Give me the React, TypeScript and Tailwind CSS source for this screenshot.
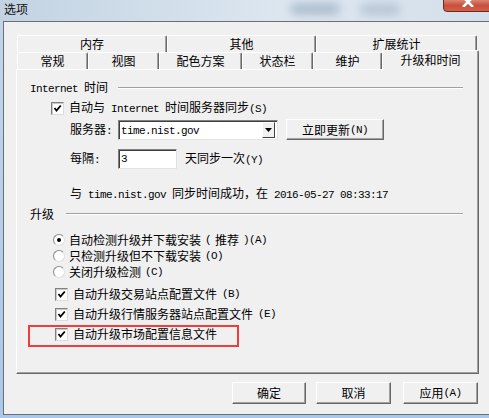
import React from 'react';

const ASCII = /^[\x20-\x7e]+$/;

// SimSun-like text: ASCII runs get a half-width mono face, CJK keeps 12px
function T({ s }: { s: string }) {
  return (
    <>
      {s.split(/([\x20-\x7e]+)/).map((p, i) =>
        ASCII.test(p) ? (
          <span key={i} className="font-['Liberation_Mono',monospace] text-[11px] tracking-[-0.6px] whitespace-pre">
            {p}
          </span>
        ) : (
          <React.Fragment key={i}>{p}</React.Fragment>
        )
      )}
    </>
  );
}

function Check() {
  return (
    <span className="flex h-[13px] w-[13px] shrink-0 items-center justify-center border border-t-[#808080] border-l-[#808080] border-r-[#dcdcdc] border-b-[#dcdcdc] bg-white shadow-[inset_1px_1px_0_#c8c8c8]">
      <svg width="9" height="9" viewBox="0 0 9 9">
        <polyline points="1.5,4 3.5,6.5 7.8,1.5" fill="none" stroke="#000" strokeWidth="1.8" />
      </svg>
    </span>
  );
}

function Radio({ on }: { on?: boolean }) {
  return (
    <span className="flex h-[12px] w-[12px] shrink-0 items-center justify-center rounded-full border border-t-[#8a8a8a] border-l-[#8a8a8a] border-r-[#e0e0e0] border-b-[#e0e0e0] bg-white">
      {on && <span className="h-[4px] w-[4px] rounded-full bg-black" />}
    </span>
  );
}

function Btn({ label, className }: { label: string; className: string }) {
  return (
    <div
      className={`flex items-center justify-center border border-t-white border-l-white border-r-[#696969] border-b-[#696969] bg-[#f0f0f0] shadow-[inset_-1px_-1px_0_#a0a0a0] ${className}`}
    >
      <T s={label} />
    </div>
  );
}

function Tab({ label, className }: { label: string; className: string }) {
  return (
    <div
      className={`flex items-center justify-center rounded-t-[2px] border-l border-t border-r border-l-white border-t-white border-r-[#696969] bg-[#f0f0f0] shadow-[inset_-1px_0_0_#a0a0a0] ${className}`}
    >
      {label}
    </div>
  );
}

function GroupHead({ label, gap }: { label: string; gap: string }) {
  return (
    <div className={`ml-[13px] mr-[15px] flex h-[14px] items-center ${gap}`}>
      <span>
        <T s={label} />
      </span>
      <div className="h-[2px] flex-1 border-t border-t-[#a0a0a0] border-b border-b-white" />
    </div>
  );
}

export default function App() {
  return (
    <div className="relative flex h-[418px] w-[489px] flex-col overflow-hidden bg-[linear-gradient(180deg,#c2d6ec,#a9c8ea)] font-['Noto_Sans_CJK_SC',sans-serif] text-[12px] leading-[14px] text-black">
      {/* title bar */}
      <div className="relative h-[21px] w-full bg-[linear-gradient(90deg,#c3d3e3_0%,#d2dfeb_35%,#dde7f0_60%,#d3dfea_100%)]">
        <div className="absolute left-[290px] top-[3px] h-[12px] w-[50px] rounded-full bg-[#8fa3b8] opacity-60 blur-[5px]" />
        <div className="absolute left-[360px] top-[4px] h-[11px] w-[40px] rounded-full bg-[#9fb1c4] opacity-60 blur-[5px]" />
        <span className="absolute left-[4px] top-[2px] text-[12px] leading-[14px] text-[#111]">选项</span>
        <div className="absolute left-[443px] top-[-4px] flex h-[16px] w-[50px] items-end justify-center rounded-bl-[4px] border border-[#6b2a22] bg-[linear-gradient(180deg,#e8a090,#c7503c_60%,#d4604a)]">
          <svg width="12" height="10" viewBox="0 0 12 10" className="mb-[4px]">
            <path d="M1 0 L11 10 M11 0 L1 10" stroke="#fff" strokeWidth="2.6" />
          </svg>
        </div>
      </div>

      {/* window body */}
      <div className="ml-[3px] h-[394px] border-l border-t border-b border-[#6e6e6e] bg-[#f0f0f0]">
        <div className="ml-[12px] mt-[13px] w-[463px]">
          <div className="ml-[1px] flex h-[17px] items-stretch">
            <Tab label="内存" className="w-[150px]" />
            <Tab label="其他" className="w-[149px]" />
            <Tab label="扩展统计" className="w-[161px]" />
          </div>
          <div className="ml-[1px] flex h-[17px] items-start">
            <Tab label="常规" className="h-[17px] w-[71px]" />
            <Tab label="视图" className="h-[17px] w-[71px]" />
            <Tab label="配色方案" className="h-[17px] w-[83px]" />
            <Tab label="状态栏" className="h-[17px] w-[71px]" />
            <Tab label="维护" className="h-[17px] w-[69px]" />
            <Tab label="升级和时间" className="relative z-10 -mt-[2px] h-[20px] w-[97px] pb-[1px]" />
          </div>

          {/* panel */}
          <div className="h-[305px] w-[463px] border border-t-white border-l-white border-r-[#696969] border-b-[#696969] shadow-[inset_-1px_-1px_0_#a0a0a0]">
            <div className="mt-[11px]">
              <GroupHead label="Internet 时间" gap="gap-[10px]" />
            </div>
            <div className="ml-[34px] mt-[6px] flex h-[14px] items-center gap-[5px]">
              <Check />
              <span>
                <T s="自动与 Internet 时间服务器同步(S)" />
              </span>
            </div>

            <div className="ml-[53px] mt-[4px] flex h-[21px] items-center">
              <span className="w-[48px]">
                <T s="服务器:" />
              </span>
              <div className="flex h-[20px] w-[160px] items-center border border-t-[#808080] border-l-[#808080] border-r-[#e3e3e3] border-b-[#e3e3e3] bg-white pl-[2px] shadow-[inset_1px_1px_0_#404040]">
                <span className="flex-1">
                  <T s="time.nist.gov" />
                </span>
                <div className="mr-[2px] flex h-[16px] w-[13px] items-center justify-center border border-t-white border-l-white border-r-[#404040] border-b-[#404040] bg-[#f0f0f0]">
                  <svg width="7" height="4" viewBox="0 0 7 4">
                    <path d="M0 0 H7 L3.5 4 Z" fill="#000" />
                  </svg>
                </div>
              </div>
              <Btn label="立即更新(N)" className="ml-[8px] h-[21px] w-[98px]" />
            </div>

            <div className="ml-[53px] mt-[9px] flex h-[20px] items-center">
              <span className="w-[48px]">
                <T s="每隔:" />
              </span>
              <div className="flex h-[20px] w-[59px] items-center border border-t-[#808080] border-l-[#808080] border-r-[#e3e3e3] border-b-[#e3e3e3] bg-white pl-[2px] shadow-[inset_1px_1px_0_#404040]">
                <T s="3" />
              </div>
              <span className="ml-[8px]">
                <T s="天同步一次(Y)" />
              </span>
            </div>

            <div className="ml-[53px] mt-[17px] h-[14px]">
              <T s="与 time.nist.gov 同步时间成功，在 2016-05-27 08:33:17" />
            </div>

            <div className="mt-[7px]">
              <GroupHead label="升级" gap="gap-[12px]" />
            </div>

            <div className="ml-[36px] mt-[11px] flex flex-col">
              <div className="flex h-[16px] items-center gap-[4px]">
                <Radio on />
                <T s="自动检测升级并下载安装(推荐)(A)" />
              </div>
              <div className="flex h-[16px] items-center gap-[4px]">
                <Radio />
                <T s="只检测升级但不下载安装(O)" />
              </div>
              <div className="flex h-[16px] items-center gap-[4px]">
                <Radio />
                <T s="关闭升级检测(C)" />
              </div>
            </div>

            <div className="ml-[38px] mt-[4px] flex flex-col">
              <div className="flex h-[20px] items-center gap-[5px]">
                <Check />
                <T s="自动升级交易站点配置文件(B)" />
              </div>
              <div className="flex h-[20px] items-center gap-[5px]">
                <Check />
                <T s="自动升级行情服务器站点配置文件(E)" />
              </div>
              <div className="relative flex h-[20px] items-center gap-[5px]">
                <Check />
                <T s="自动升级市场配置信息文件" />
                <div className="absolute left-[-27px] top-[1px] h-[22px] w-[211px] border-2 border-[#f03c3c]" />
              </div>
            </div>
          </div>
        </div>

        {/* dialog buttons */}
        <div className="mt-[8px] flex h-[22px] justify-end pr-[11px]">
          <Btn label="确定" className="h-[22px] w-[74px] border-r-[#202020] border-b-[#202020]" />
          <Btn label="取消" className="ml-[10px] h-[22px] w-[75px]" />
          <Btn label="应用(A)" className="ml-[12px] h-[22px] w-[75px]" />
        </div>
      </div>
    </div>
  );
}
